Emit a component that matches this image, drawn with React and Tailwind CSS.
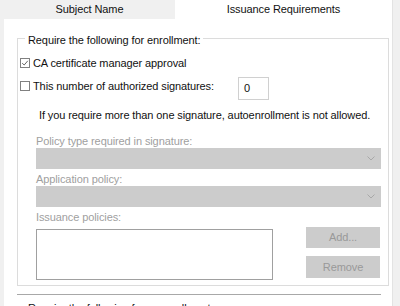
import React from 'react';

function Chevron() {
  return (
    <svg width="8" height="5" viewBox="0 0 8 5" className="text-[#a8a8a8]">
      <path d="M0.5 0.5 L4 4 L7.5 0.5" fill="none" stroke="currentColor" strokeWidth="1" />
    </svg>
  );
}

function CheckBox({ checked }) {
  return (
    <span className="flex h-[10px] w-[10px] shrink-0 items-center justify-center border border-[#808080] bg-white">
      {checked && (
        <svg width="8" height="8" viewBox="0 0 8 8">
          <path d="M1.2 4.2 L3.2 6 L6.8 1.8" fill="none" stroke="#666" strokeWidth="1" />
        </svg>
      )}
    </span>
  );
}

function DisabledCombo() {
  return (
    <div className="flex h-[21px] items-center justify-end bg-[#cccccc] pr-[6px]">
      <Chevron />
    </div>
  );
}

export default function App() {
  return (
    <div
      className="flex h-[306px] w-[400px] overflow-hidden bg-[#f0f0f0] text-[11px] tracking-[-0.1px] text-[#111]"
      style={{ fontFamily: '"Liberation Sans", Arial, sans-serif' }}
    >
      <div className="ml-[4px] flex w-[388px] shrink-0 flex-col bg-white">
        {/* tabs */}
        <div className="flex h-[19px] shrink-0">
          <div className="flex w-[171px] items-center justify-center bg-[#f0f0f0] pb-[1px]">
            Subject Name
          </div>
          <div className="flex flex-1 items-center justify-center pb-[1px]">
            Issuance Requirements
          </div>
        </div>

        {/* group box */}
        <div className="relative ml-[13px] mr-[3px] mt-[19px] flex shrink-0 flex-col border border-[#dcdcdc] pb-[5px]">
          <span className="absolute left-[7px] top-[-6px] whitespace-nowrap bg-white px-[3px] leading-[14px]">
            Require the following for enrollment:
          </span>
          <div className="ml-[2px] mt-[17px] flex h-[14px] items-center gap-[3px]">
            <CheckBox checked />
            <span className="whitespace-nowrap">CA certificate manager approval</span>
          </div>
          <div className="ml-[2px] mt-[7px] flex h-[23px] items-start">
            <div className="mt-[2px] flex h-[14px] w-[218px] items-center gap-[3px]">
              <CheckBox />
              <span className="whitespace-nowrap">This number of authorized signatures:</span>
            </div>
            <div className="flex h-[23px] w-[31px] items-center border border-[#d0d0d0] pl-[5px]">0</div>
          </div>
          <div className="ml-[21px] mt-[8px] whitespace-nowrap leading-[14px]">
            If you require more than one signature, autoenrollment is not allowed.
          </div>
          <div className="ml-[18px] mr-[7px] mt-[13px] flex flex-col text-[#a0a0a0]">
            <span className="leading-[13px]">Policy type required in signature:</span>
            <DisabledCombo />
            <span className="mt-[4px] leading-[13px]">Application policy:</span>
            <DisabledCombo />
            <span className="mt-[4px] leading-[13px]">Issuance policies:</span>
            <div className="flex items-start justify-between">
              <div className="mt-[5px] h-[51px] w-[237px] border border-[#a0a0a0]" />
              <div className="mr-[1px] mt-[3px] flex flex-col gap-[8px]">
                <div className="flex h-[21px] w-[74px] items-center justify-center bg-[#cccccc] text-[#999]">Add...</div>
                <div className="flex h-[22px] w-[74px] items-center justify-center bg-[#cccccc] text-[#999]">Remove</div>
              </div>
            </div>
          </div>
        </div>

        {/* next section */}
        <div className="ml-[13px] mr-[11px] mt-[8px] shrink-0 border-t border-[#a8a8a8]" />
        <div className="ml-[24px] mt-[6px] shrink-0 whitespace-nowrap leading-[14px]">
          Require the following for re-enrollment:
        </div>
      </div>
      <div className="w-[1px] shrink-0 bg-[#e3e3e3]" />
    </div>
  );
}
